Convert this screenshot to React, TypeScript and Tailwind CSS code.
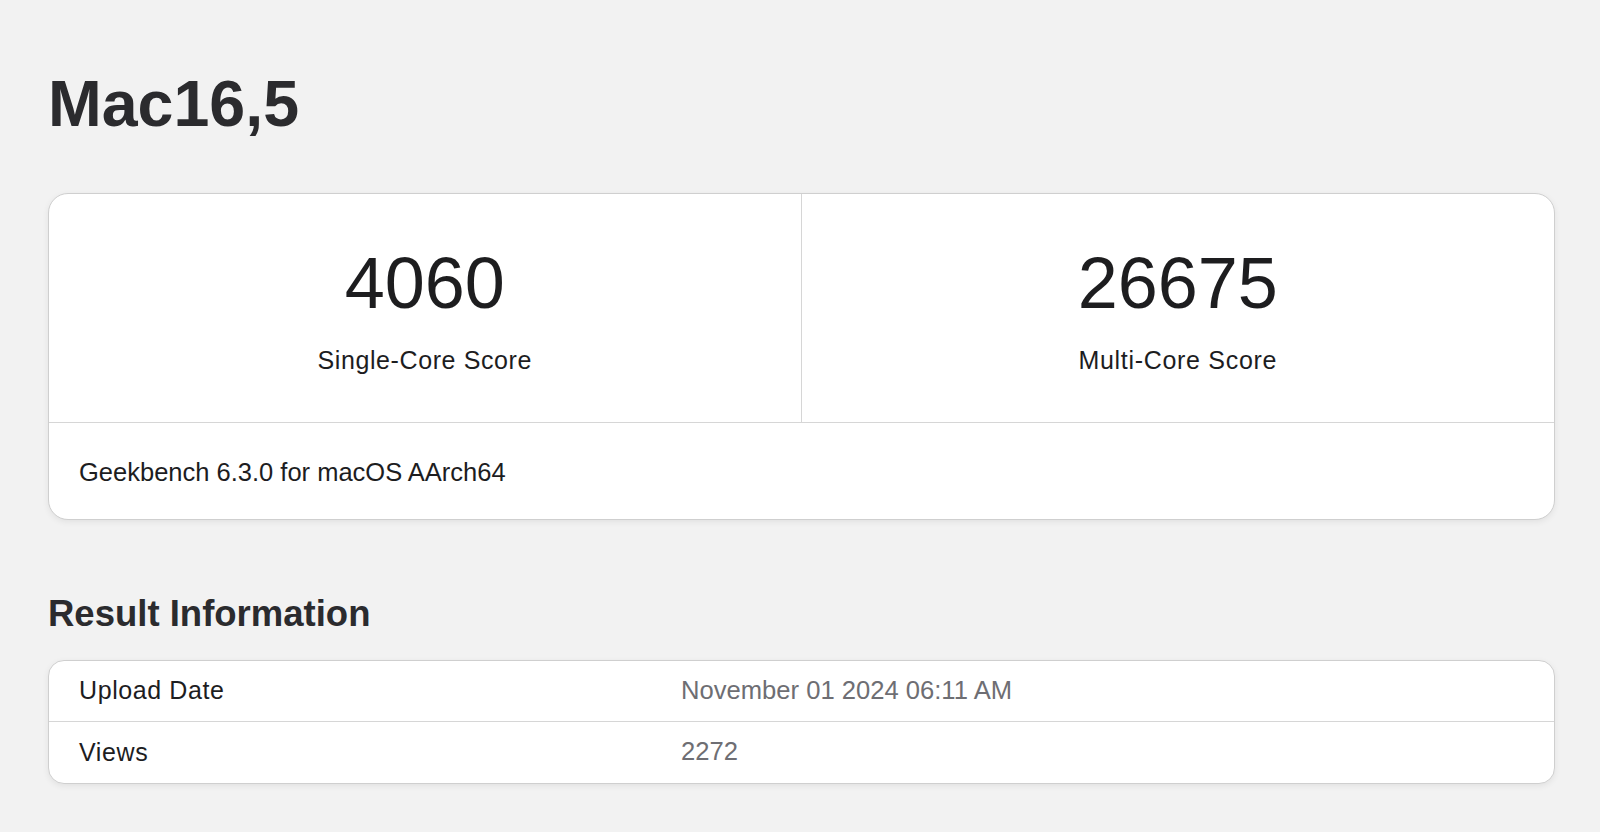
export default function App() {
  return (
    <div className="min-h-[832px] w-full bg-[#f2f2f2] pl-12 pr-[45px] pt-[72px] font-['Liberation_Sans',Arial,sans-serif] text-[#1d1d1f]">
      <h1 className="text-[64.5px] font-bold leading-none text-[#2b2b2e]">Mac16,5</h1>

      <div className="mt-[56px] overflow-hidden rounded-[20px] border border-[#cfcfcf] bg-white shadow-[0_2px_6px_rgba(0,0,0,0.07)]">
        <div className="grid grid-cols-2">
          <div className="flex flex-col items-center border-r border-[#d6d6d6] pt-[53px] pb-[49px]">
            <div className="text-[72px] leading-none">4060</div>
            <div className="mt-[29px] text-[25px] leading-none tracking-[0.6px]">Single-Core Score</div>
          </div>
          <div className="flex flex-col items-center pt-[53px] pb-[49px]">
            <div className="text-[72px] leading-none">26675</div>
            <div className="mt-[29px] text-[25px] leading-none tracking-[0.7px]">Multi-Core Score</div>
          </div>
        </div>
        <div className="border-t border-[#d6d6d6] pl-[30px] pt-[37px] pb-[34px] text-[25.5px] leading-none">
          Geekbench 6.3.0 for macOS AArch64
        </div>
      </div>

      <h2 className="mt-[76px] text-[36.5px] font-bold leading-none text-[#2b2b2e]">Result Information</h2>

      <div className="mt-[27px] overflow-hidden rounded-[16px] border border-[#cfcfcf] bg-white shadow-[0_2px_6px_rgba(0,0,0,0.07)]">
        <div className="flex h-[61px] items-center border-b border-[#d6d6d6]">
          <div className="w-[632px] pl-[30px] text-[25px] leading-none tracking-[0.6px]">Upload Date</div>
          <div className="text-[25.6px] leading-none text-[#6e6e73]">November 01 2024 06:11 AM</div>
        </div>
        <div className="flex h-[61px] items-center">
          <div className="w-[632px] pl-[30px] text-[25px] leading-none tracking-[0.6px]">Views</div>
          <div className="text-[25.6px] leading-none text-[#6e6e73]">2272</div>
        </div>
      </div>
    </div>
  );
}
